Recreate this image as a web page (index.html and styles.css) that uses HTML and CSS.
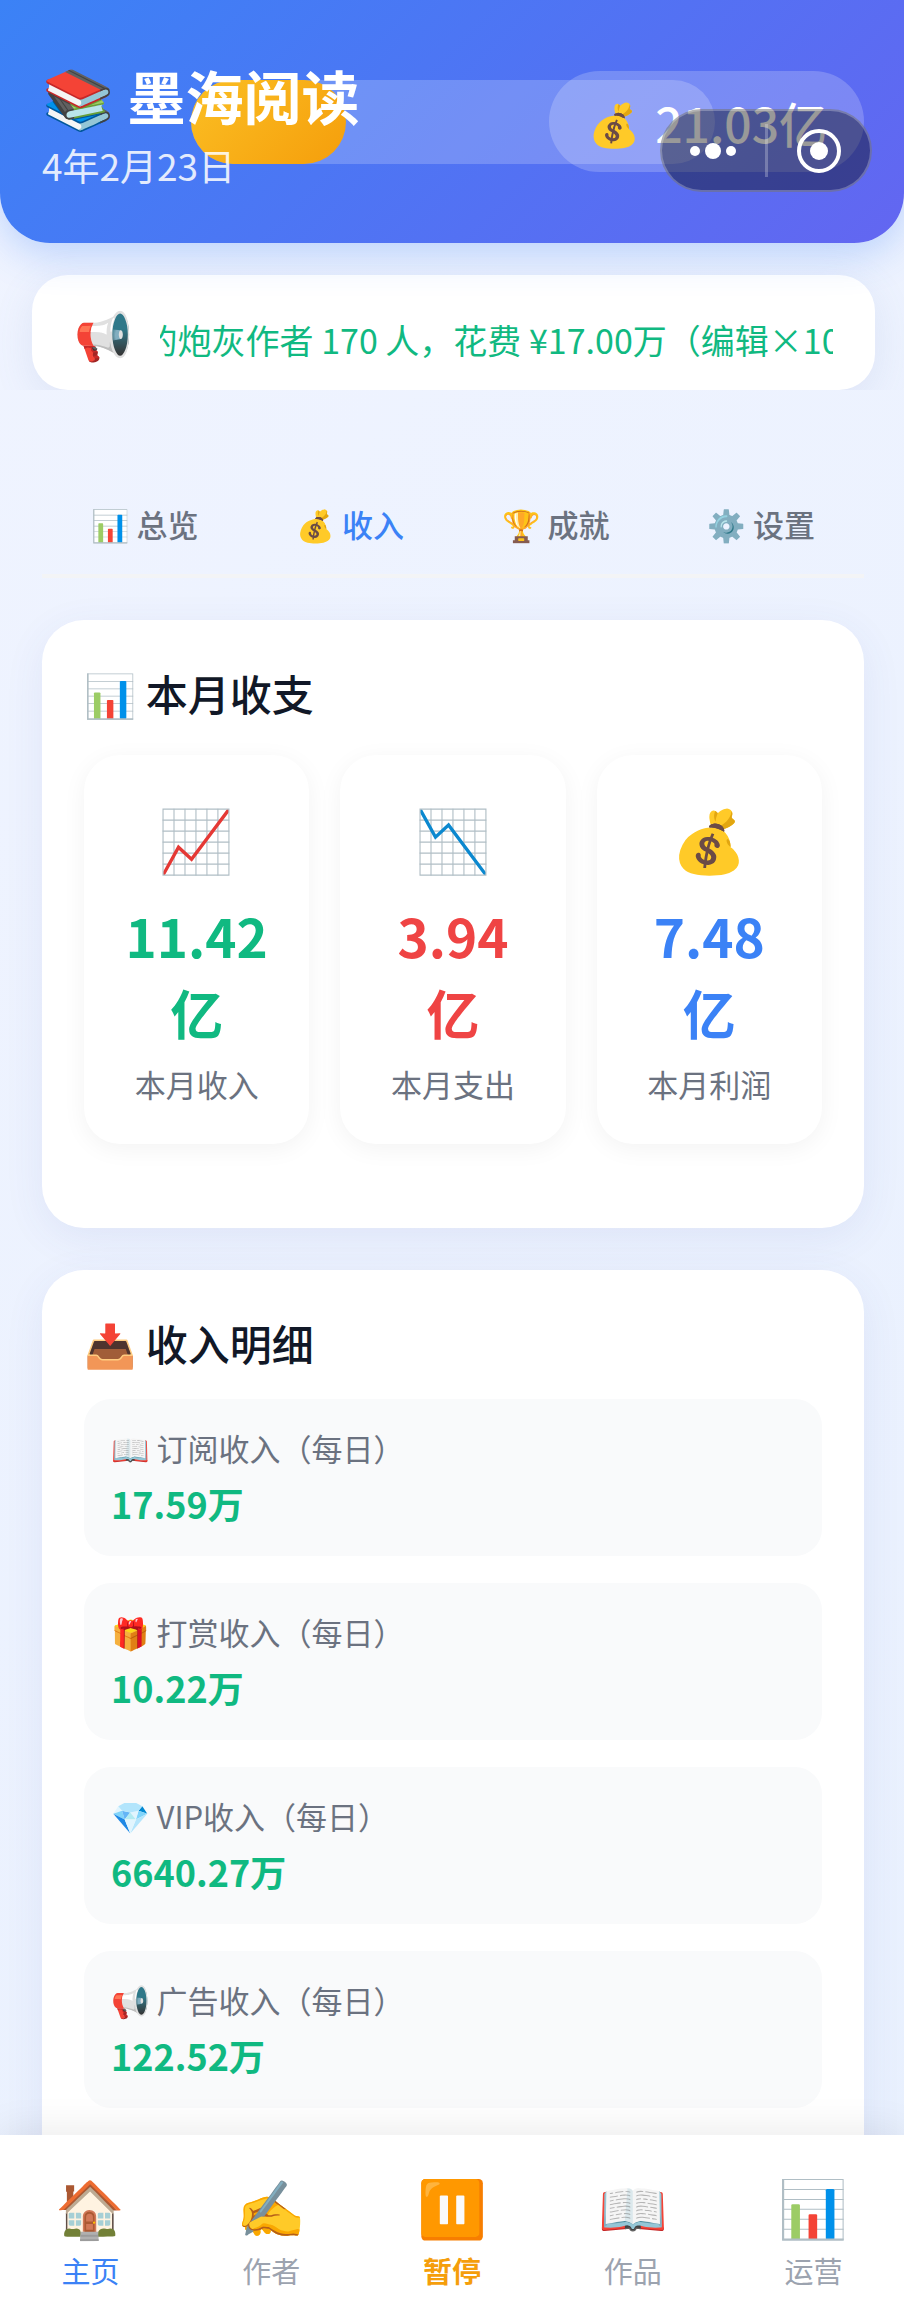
FILE: index.html
```html
<!DOCTYPE html>
<html lang="zh-CN">
<head>
<meta charset="utf-8">
<meta name="viewport" content="width=device-width, initial-scale=1">
<title>墨海阅读</title>
<link rel="stylesheet" href="styles.css">
</head>
<body>
<div class="app">
  <div class="scroll">
    <header class="header">
      <div class="progress"><div class="progress-fill"></div></div>
      <div class="brand">
        <h1 class="brand-name"><span class="emoji">📚</span> 墨海阅读</h1>
        <p class="brand-date">4年2月23日</p>
      </div>
      <div class="balance"><span class="emoji">💰</span> <span>21.03亿</span></div>
      <div class="capsule">
        <button class="capsule-btn" type="button" aria-label="更多">
          <svg class="capsule-icon" viewBox="0 0 48 48" aria-hidden="true"><circle cx="6" cy="24" r="5"/><circle cx="24" cy="24" r="8"/><circle cx="42" cy="24" r="5"/></svg>
        </button>
        <span class="capsule-line"></span>
        <button class="capsule-btn" type="button" aria-label="关闭">
          <svg class="capsule-icon" viewBox="0 0 48 48" aria-hidden="true"><circle class="ring" cx="24" cy="24" r="20"/><circle cx="24" cy="24" r="9"/></svg>
        </button>
      </div>
    </header>

    <div class="notice-wrap">
      <div class="notice">
        <span class="notice-icon emoji">📢</span>
        <div class="notice-view"><p class="notice-text">的炮灰作者 170 人，花费 ¥17.00万（编辑×10</p></div>
      </div>
    </div>

    <nav class="tabs">
      <button class="tab" type="button"><span class="emoji">📊</span> 总览</button>
      <button class="tab active" type="button"><span class="emoji">💰</span> 收入</button>
      <button class="tab" type="button"><span class="emoji">🏆</span> 成就</button>
      <button class="tab" type="button"><span class="emoji">⚙️</span> 设置</button>
    </nav>

    <main class="content">
      <section class="card">
        <h2 class="card-title"><span class="emoji">📊</span> 本月收支</h2>
        <div class="stats">
          <div class="stat"><span class="stat-icon emoji">📈</span><strong class="stat-value green">11.42亿</strong><span class="stat-label">本月收入</span></div>
          <div class="stat"><span class="stat-icon emoji">📉</span><strong class="stat-value red">3.94亿</strong><span class="stat-label">本月支出</span></div>
          <div class="stat"><span class="stat-icon emoji">💰</span><strong class="stat-value blue">7.48亿</strong><span class="stat-label">本月利润</span></div>
        </div>
      </section>

      <section class="card">
        <h2 class="card-title"><span class="emoji">📥</span> 收入明细</h2>
        <ul class="rows">
          <li class="row"><span class="row-label"><span class="emoji">📖</span> 订阅收入（每日）</span><strong class="row-value">17.59万</strong></li>
          <li class="row"><span class="row-label"><span class="emoji">🎁</span> 打赏收入（每日）</span><strong class="row-value">10.22万</strong></li>
          <li class="row"><span class="row-label"><span class="emoji">💎</span> VIP收入（每日）</span><strong class="row-value">6640.27万</strong></li>
          <li class="row"><span class="row-label"><span class="emoji">📢</span> 广告收入（每日）</span><strong class="row-value">122.52万</strong></li>
        </ul>
      </section>
    </main>
  </div>

  <nav class="tabbar">
    <button class="tabbar-item current" type="button"><span class="tabbar-icon emoji">🏠</span><span>主页</span></button>
    <button class="tabbar-item" type="button"><span class="tabbar-icon emoji">✍️</span><span>作者</span></button>
    <button class="tabbar-item pause" type="button"><span class="tabbar-icon emoji">⏸️</span><span>暂停</span></button>
    <button class="tabbar-item" type="button"><span class="tabbar-icon emoji">📖</span><span>作品</span></button>
    <button class="tabbar-item" type="button"><span class="tabbar-icon emoji">📊</span><span>运营</span></button>
  </nav>
</div>
</body>
</html>
```
FILE: styles.css
```css
* { box-sizing: border-box; margin: 0; padding: 0; }

body, button {
  font-family: "Noto Sans CJK SC", "Noto Color Emoji", sans-serif;
}

button { border: 0; background: none; color: inherit; cursor: pointer; }

.app {
  display: flex;
  flex-direction: column;
  height: 100vh;
  background: linear-gradient(135deg, #f0f4ff 0%, #e8f0fe 100%);
}

.scroll { flex: 1; min-height: 0; overflow-y: auto; scrollbar-width: none; }

/* Header */
.header {
  position: relative;
  display: flex;
  justify-content: space-between;
  align-items: flex-start;
  padding: 57px 40px 46px 42px;
  min-height: 243px;
  color: #fff;
  background: linear-gradient(135deg, #3b82f6 0%, #6366f1 100%);
  border-radius: 0 0 50px 50px;
  box-shadow: 0 10px 40px rgba(59, 130, 246, 0.3);
}

.brand { position: relative; }
.brand-name { font-size: 58px; line-height: 76px; font-weight: 700; white-space: nowrap; }
.brand-date { font-size: 37px; line-height: 64px; opacity: 0.85; }

.progress {
  position: absolute;
  top: 80px;
  left: 191px;
  right: 189px;
  height: 84px;
  border-radius: 42px;
  background: rgba(255, 255, 255, 0.2);
}
.progress-fill {
  width: 155px;
  height: 100%;
  border-radius: 42px;
  background: linear-gradient(135deg, #fbbf24, #f59e0b);
}

.balance {
  position: relative;
  display: flex;
  align-items: center;
  gap: 15px;
  height: 101px;
  margin-top: 14px;
  padding: 0 37px 0 39px;
  font-size: 48px;
  line-height: 70px;
  font-weight: 500;
  border-radius: 51px;
  background: rgba(255, 255, 255, 0.2);
  white-space: nowrap;
}
.balance .emoji { font-size: 42px; }

.capsule {
  position: absolute;
  top: 109px;
  right: 32px;
  display: flex;
  align-items: center;
  width: 212px;
  height: 83px;
  border: 2px solid rgba(255, 255, 255, 0.25);
  border-radius: 42px;
  background: rgba(0, 0, 0, 0.4);
}
.capsule-btn { flex: 1; display: flex; justify-content: center; }
.capsule-icon { width: 48px; height: 48px; fill: #fff; }
.capsule-icon .ring { fill: none; stroke: #fff; stroke-width: 4; }
.capsule-line { width: 3px; height: 53px; background: rgba(255, 255, 255, 0.25); }

/* Notice */
.notice-wrap { padding: 32px 29px 0 32px; overflow: hidden; }
.notice {
  display: flex;
  align-items: center;
  gap: 27px;
  height: 115px;
  padding: 0 42px 0 42px;
  border-radius: 36px;
  background: #fff;
  box-shadow: 0 10px 40px rgba(99, 120, 180, 0.12);
}
.notice-icon { font-size: 47px; line-height: 56px; }
.notice-view { flex: 1; display: flex; padding-top: 14px; overflow: hidden; }
.notice-text { margin-left: -16px; font-size: 34px; line-height: 56px; color: #10b981; white-space: nowrap; }

/* Tabs */
.tabs {
  display: flex;
  margin: 80px 40px 0 42px;
  border-bottom: 4px solid #f3f4f6;
}
.tab { flex: 1; padding: 31px 0 27px; font-size: 31px; line-height: 46px; font-weight: 500; color: #6b7280; }
.tab.active { color: #3b82f6; }

/* Cards */
.content { display: flex; flex-direction: column; gap: 42px; padding: 42px 40px 42px 42px; }
.card {
  padding: 42px 42px 84px;
  border-radius: 42px;
  background: #fff;
  box-shadow: 0 10px 40px rgba(59, 80, 160, 0.08);
}
.card-title { margin-bottom: 25px; font-size: 42px; line-height: 62px; font-weight: 500; color: #111827; }

.stats { display: grid; grid-template-columns: repeat(3, 1fr); gap: 31px; padding-top: 6px; }
.stat {
  display: flex;
  flex-direction: column;
  align-items: center;
  padding: 38px 36px 37px;
  border-radius: 36px;
  background: #fff;
  box-shadow: 0 5px 24px rgba(0, 0, 0, 0.05);
  text-align: center;
}
.stat-icon { font-size: 61px; line-height: 88px; }
.stat-value { margin-top: 16px; font-size: 53px; line-height: 77px; font-weight: 700; }
.stat-label { margin-top: 10px; font-size: 31px; line-height: 46px; color: #6b7280; }
.green { color: #10b981; }
.red { color: #ef4444; }
.blue { color: #3b82f6; }

.rows { display: flex; flex-direction: column; gap: 27px; list-style: none; }
.row {
  display: flex;
  flex-direction: column;
  padding: 26px 27px 25px;
  border-radius: 27px;
  background: #f9fafb;
}
.row-label { font-size: 31px; line-height: 46px; color: #6b7280; }
.row-value { margin-top: 4px; font-size: 36px; line-height: 56px; font-weight: 700; color: #10b981; }

/* Bottom bar */
.tabbar {
  position: relative;
  display: flex;
  height: 181px;
  background: #fff;
  box-shadow: 0 -5px 36px rgba(0, 0, 0, 0.08);
}
.tabbar-item {
  flex: 1;
  display: flex;
  flex-direction: column;
  align-items: center;
  padding-top: 31px;
  font-size: 29px;
  line-height: 42px;
  color: #9ca3af;
}
.tabbar-icon { margin-bottom: 5px; font-size: 56px; line-height: 78px; }
.tabbar-item.current { color: #3b82f6; }
.tabbar-item.pause { color: #f59e0b; font-weight: 700; }
```
